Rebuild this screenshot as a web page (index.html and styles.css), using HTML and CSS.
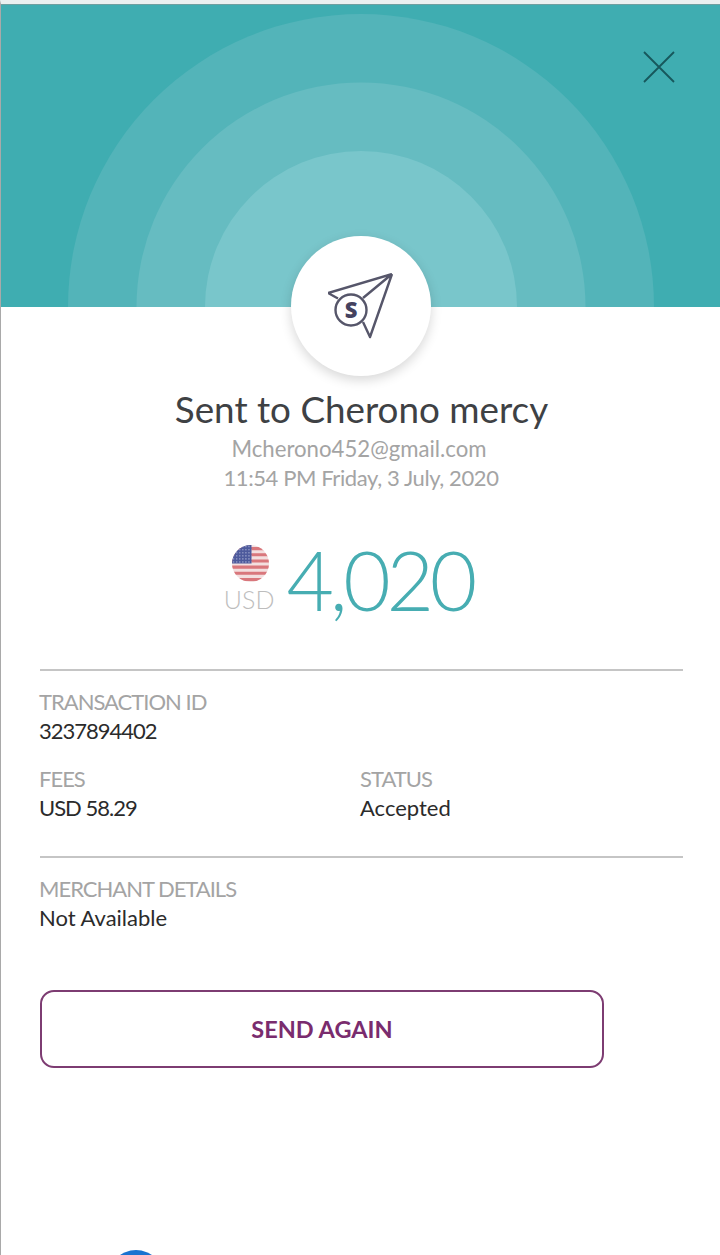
FILE: index.html
```html
<!DOCTYPE html>
<html lang="en">
<head>
<meta charset="utf-8">
<title>Sent to Cherono mercy</title>
<link rel="stylesheet" href="styles.css">
</head>
<body>
<div class="page">
  <header class="hero">
    <div class="ring ring-1"></div>
    <div class="ring ring-2"></div>
    <div class="ring ring-3"></div>
    <svg class="close" viewBox="0 0 32 32" aria-label="Close"><path d="M1 1 31 31M31 1 1 31"/></svg>
  </header>
  <div class="badge">
    <svg viewBox="0 0 66 66" width="66" height="66">
      <path class="plane" d="M64 1 0 20 10 25.5M64 1 35 25M64 1 42 64 35 49"/>
      <circle class="plane" cx="23" cy="37" r="15.5"/>
      <text x="23" y="44.5" class="s">S</text>
    </svg>
  </div>
  <main class="content">
    <h1 class="title">Sent to Cherono mercy</h1>
    <p class="sub sub-mail">Mcherono452@gmail.com</p>
    <p class="sub sub-date">11:54 PM Friday, 3 July, 2020</p>
    <div class="amount">
      <div class="currency">
        <svg class="flag" viewBox="0 0 36 36" width="37" height="37">
          <defs>
            <clipPath id="c"><circle cx="18" cy="18" r="18"/></clipPath>
            <pattern id="stars" width="3" height="3" patternUnits="userSpaceOnUse"><circle cx="1.5" cy="1.5" r=".6" fill="#c5cbe6"/></pattern>
          </defs>
          <g clip-path="url(#c)">
            <rect width="36" height="36" fill="#f3dfdf"/>
            <path d="M0 2h36v3H0zM0 8h36v3H0zM0 14h36v3H0zM0 20h36v3H0zM0 26h36v3H0zM0 32h36v3H0z" fill="#d9777c"/>
            <rect width="19" height="18" fill="#4d5a9c"/>
            <rect width="19" height="18" fill="url(#stars)"/>
          </g>
        </svg>
        <span class="code">USD</span>
      </div>
      <span class="value">4,020</span>
    </div>
    <section class="block block-tx">
      <div class="label">TRANSACTION ID</div>
      <div class="val val-num">3237894402</div>
      <div class="pair">
        <div>
          <div class="label">FEES</div>
          <div class="val val-num">USD 58.29</div>
        </div>
        <div>
          <div class="label">STATUS</div>
          <div class="val">Accepted</div>
        </div>
      </div>
    </section>
    <section class="block block-merchant">
      <div class="label">MERCHANT DETAILS</div>
      <div class="val">Not Available</div>
    </section>
    <button class="again" type="button">SEND AGAIN</button>
  </main>
  <div class="fab"></div>
</div>
</body>
</html>
```
FILE: styles.css
```css
* { box-sizing: border-box; }
html, body { margin: 0; padding: 0; }
body { background: #fff; font-family: "Lato", "Liberation Sans", sans-serif; overflow: hidden; }
.page { position: relative; width: 720px; height: 1255px; overflow: hidden; background: #fff; border-left: 1px solid #a9a9a9; border-top: 4px solid #eaf0f0; }
.hero { position: relative; height: 303px; margin-left: -1px; background: #3fadb1; overflow: hidden; border-top: 1px solid #6f9fa0; }
.ring { position: absolute; left: 361px; top: 302px; border-radius: 50%; transform: translate(-50%, -50%); }
.ring-1 { width: 586px; height: 586px; background: #53b4b9; }
.ring-2 { width: 449px; height: 449px; background: #66bcc1; }
.ring-3 { width: 312px; height: 312px; background: #79c6cb; }
.close { position: absolute; left: 643px; top: 46px; width: 32px; height: 32px; fill: none; stroke: #17575c; stroke-width: 1.8; }
.badge { position: absolute; left: 290px; top: 232px; width: 140px; height: 140px; border-radius: 50%; background: #fff; box-shadow: 0 4px 12px rgba(0,0,0,.16); display: flex; align-items: center; justify-content: center; }
.plane { fill: none; stroke: #56566a; stroke-width: 2.4; stroke-linejoin: round; }
.s { font-family: "Open Sans", sans-serif; font-weight: 800; font-size: 22px; text-anchor: middle; fill: #45425f; }
.content { padding: 77px 37px 0 39px; }
.title { margin: 0; text-align: center; font-size: 36.8px; line-height: 50px; font-weight: 400; color: #3e4144; }
.sub { margin: 0; text-align: center; font-size: 22.2px; line-height: 29px; color: #a4a4a4; }
.sub-mail { padding-right: 5px; }
.sub-date { font-size: 22px; letter-spacing: -.4px; padding-right: 1px; }
.amount { display: flex; justify-content: center; align-items: flex-start; gap: 12px; height: 122px; padding-top: 48px; padding-right: 26px; }
.currency { display: flex; flex-direction: column; align-items: center; padding-top: 5px; }
.code { font-size: 25px; line-height: 32px; font-weight: 300; color: #bdbdbd; margin-top: 2px; }
.flag { display: block; margin-bottom: -1px; margin-left: 3px; }
.value { font-size: 82px; line-height: 84px; font-weight: 300; color: #47adb2; letter-spacing: -4.3px; margin-top: -3px; }
.block { border-top: 2px solid #c5c5c5; }
.block-tx { margin-top: 55px; padding-top: 16px; height: 187px; }
.block-merchant { padding-top: 16px; }
.label { font-size: 22px; line-height: 29px; color: #a4a4a4; letter-spacing: -1px; margin-left: -1px; }
.val { font-size: 22px; line-height: 29px; color: #2b2b2b; margin-left: -1px; }
.val-num { letter-spacing: -1px; }
.pair { display: grid; grid-template-columns: 321px 1fr; margin-top: 19px; }
.again { display: block; width: 564px; height: 78px; margin-top: 58px; border: 2px solid #7d3c72; border-radius: 14px; background: #fff; color: #7a2c6e; font-family: inherit; font-size: 23.5px; font-weight: 700; }
.fab { position: absolute; left: 107px; top: 1246px; width: 56px; height: 56px; border-radius: 50%; background: #1a73d0; }
```
